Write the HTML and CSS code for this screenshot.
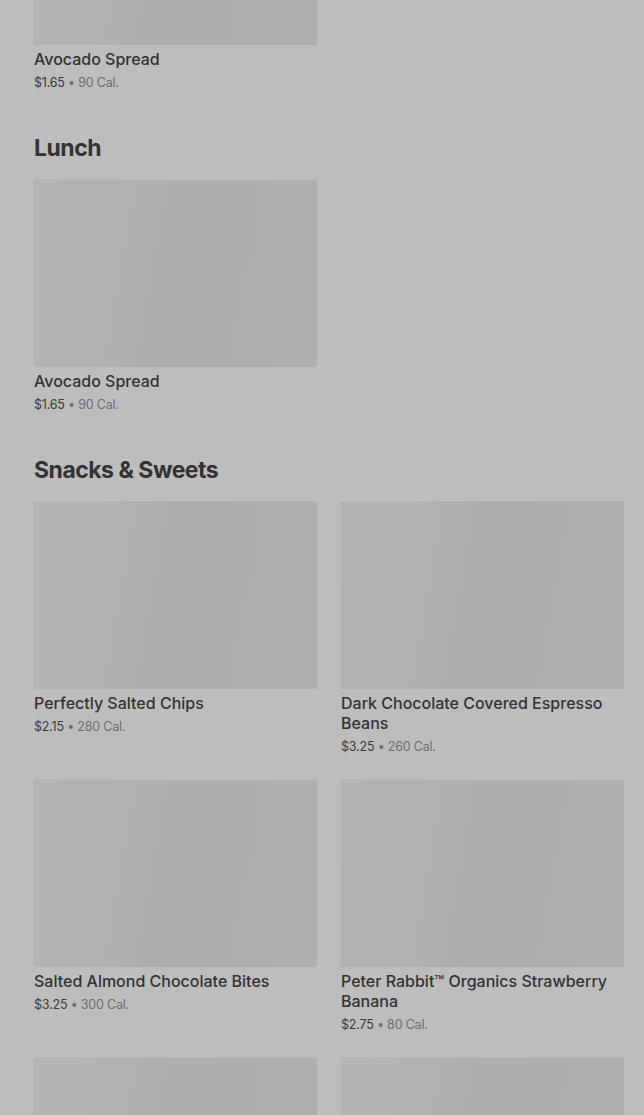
FILE: index.html
```html
<!DOCTYPE html>
<html lang="en">
<head>
<meta charset="utf-8">
<title>Menu</title>
<link rel="stylesheet" href="styles.css">
</head>
<body>
<main class="menu">
  <section class="section section-first">
    <div class="grid">
      <article class="card">
        <div class="thumb"></div>
        <h3 class="name">Avocado Spread</h3>
        <p class="meta"><span class="price">$1.65</span> <span class="cal">• 90 Cal.</span></p>
      </article>
    </div>
  </section>

  <section class="section">
    <h2 class="heading">Lunch</h2>
    <div class="grid">
      <article class="card">
        <div class="thumb"></div>
        <h3 class="name">Avocado Spread</h3>
        <p class="meta"><span class="price">$1.65</span> <span class="cal">• 90 Cal.</span></p>
      </article>
    </div>
  </section>

  <section class="section">
    <h2 class="heading">Snacks &amp; Sweets</h2>
    <div class="grid">
      <article class="card">
        <div class="thumb"></div>
        <h3 class="name">Perfectly Salted Chips</h3>
        <p class="meta"><span class="price">$2.15</span> <span class="cal">• 280 Cal.</span></p>
      </article>
      <article class="card">
        <div class="thumb"></div>
        <h3 class="name">Dark Chocolate Covered Espresso Beans</h3>
        <p class="meta"><span class="price">$3.25</span> <span class="cal">• 260 Cal.</span></p>
      </article>
      <article class="card">
        <div class="thumb"></div>
        <h3 class="name">Salted Almond Chocolate Bites</h3>
        <p class="meta"><span class="price">$3.25</span> <span class="cal">• 300 Cal.</span></p>
      </article>
      <article class="card">
        <div class="thumb"></div>
        <h3 class="name">Peter Rabbit™ Organics Strawberry Banana</h3>
        <p class="meta"><span class="price">$2.75</span> <span class="cal">• 80 Cal.</span></p>
      </article>
      <article class="card">
        <div class="thumb"></div>
      </article>
      <article class="card">
        <div class="thumb"></div>
      </article>
    </div>
  </section>
</main>
</body>
</html>
```
FILE: styles.css
```css
* { box-sizing: border-box; }

html, body {
  margin: 0;
  padding: 0;
  background: #bdbdbd;
  overflow: hidden;
}

body {
  font-family: Inter, "Noto Sans", "Liberation Sans", sans-serif;
  color: #2f2f2f;
}

.menu {
  padding: 0 20px 0 34px;
  margin-top: -142px;
}

.section {
  margin-top: 38px;
}

.section-first {
  margin-top: 0;
}

.heading {
  margin: 0 0 16px;
  padding-top: 1px;
  font-size: 23px;
  line-height: 32px;
  font-weight: 700;
  letter-spacing: -0.5px;
  color: #333333;
}

.grid {
  display: grid;
  grid-template-columns: 283px 283px;
  column-gap: 24px;
  row-gap: 23px;
  align-items: start;
}

.thumb {
  height: 187px;
  background: linear-gradient(100deg, #b4b4b4 0%, #b2b2b2 25%, #aeaeae 45%, #afafaf 100%);
  box-shadow: 0 -1px 0 #b8b8b8, -1px 0 0 #b8b8b8;
}

.name {
  margin: 4px 0 0;
  font-size: 16px;
  line-height: 20px;
  font-weight: 500;
  color: #333333;
}

.meta {
  margin: 4px 0 0;
  font-size: 12.5px;
  line-height: 20px;
  font-weight: 400;
  letter-spacing: -0.2px;
}

.price {
  color: #3a3a3a;
}

.cal {
  color: #6e6e6e;
}
```
